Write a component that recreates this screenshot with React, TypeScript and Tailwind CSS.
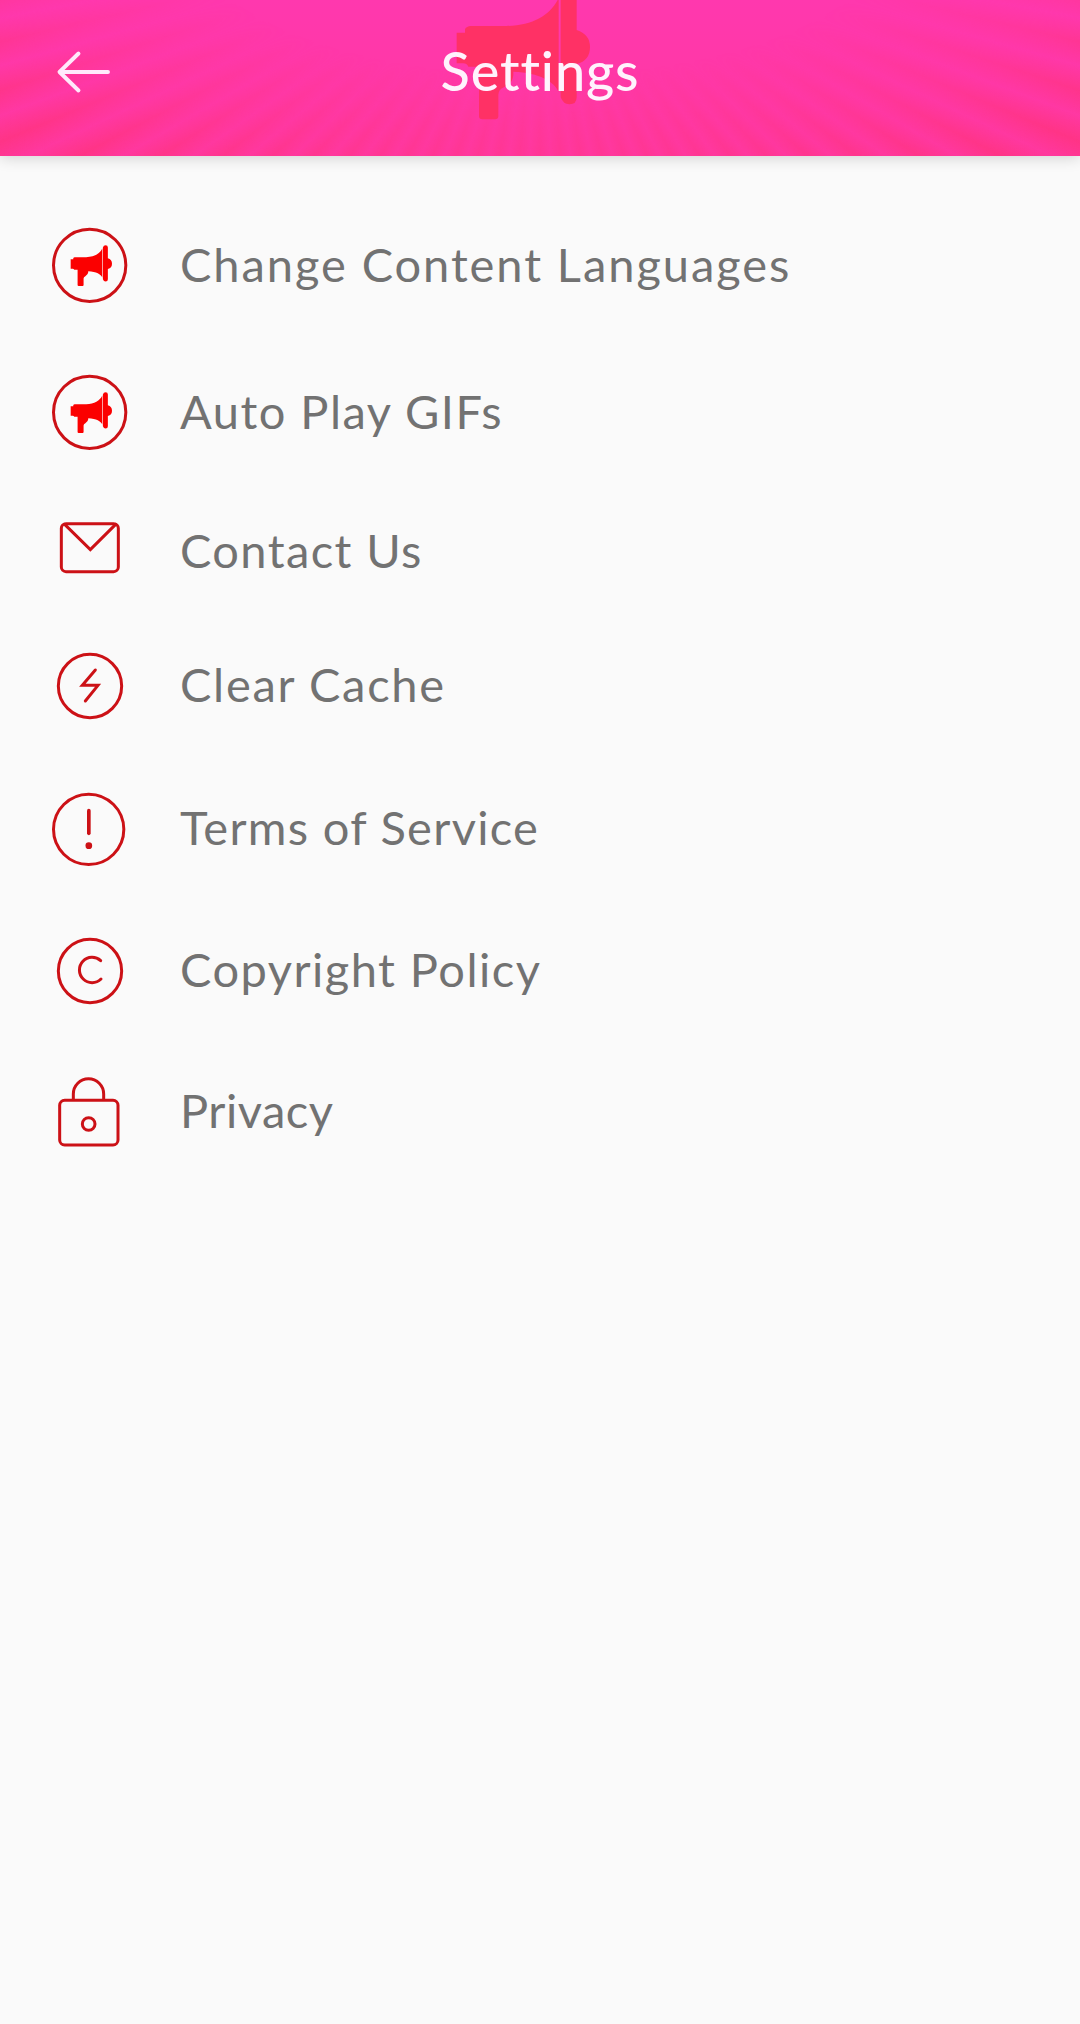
import type { ReactNode } from "react";

type Item = {
  label: string;
  icon: ReactNode;
  // row height, plus how far the icon hangs above the text line
  row: string;
  offset: string;
  text: string;
};

function Horn() {
  return (
    <g>
      <path d="M80 98 H105 V88 Q108 80 120 78 H230 C310 76 362 45 386 -6 V275 C372 245 330 218 250 215 V225 Q248 250 222 262 Q205 268 205 285 V348 Q205 358 195 358 H157 Q147 358 147 348 V200 H115 Q110 190 100 190 H80 Z" />
      <path d="M392 -14 Q398 -36 418 -36 Q440 -36 440 -14 V90 Q480 103 480 141 Q480 182 440 192 V292 Q440 313 418 313 Q400 313 392 292 Z" />
    </g>
  );
}

function HornIcon() {
  return (
    <>
      <circle cx="149" cy="151" r="108.5" />
      <g transform="translate(67.2 102.2) scale(0.31)" className="fill-[#fb0000]" stroke="none">
        <Horn />
      </g>
    </>
  );
}

const items: Item[] = [
  {
    label: "Change Content Languages",
    row: "h-[147px]",
    offset: "-mt-[19px]",
    text: "tracking-[1.93px]",
    icon: <HornIcon />,
  },
  {
    label: "Auto Play GIFs",
    row: "h-[139px]",
    offset: "-mt-[19px]",
    text: "tracking-[1.5px]",
    icon: <HornIcon />,
  },
  {
    label: "Contact Us",
    row: "h-[134px]",
    offset: "-mt-[10px]",
    text: "tracking-[1.4px]",
    icon: (
      <>
        <rect x="64" y="41" width="171" height="144" rx="14" />
        <path d="M74 43 L151 119 L227 43" />
      </>
    ),
  },
  {
    label: "Clear Cache",
    row: "h-[143px]",
    offset: "-mt-[14px]",
    text: "tracking-[1.7px]",
    icon: (
      <>
        <circle cx="150" cy="138" r="95" />
        <path d="M166 90 L127 136 H174 L136 183" />
      </>
    ),
  },
  {
    label: "Terms of Service",
    row: "h-[142px]",
    offset: "-mt-[17px]",
    text: "tracking-[1.3px]",
    icon: (
      <>
        <circle cx="146" cy="148" r="105.5" />
        <path d="M146.500 92 V160" strokeWidth="11" />
        <circle cx="146.500" cy="197" r="10" className="fill-[#cc1116]" stroke="none" />
      </>
    ),
  },
  {
    label: "Copyright Policy",
    row: "h-[141px]",
    offset: "-mt-[14px]",
    text: "tracking-[1.47px]",
    icon: (
      <>
        <circle cx="150" cy="138" r="95" />
        <path d="M182 107 A38 38 0 1 0 183 162" />
      </>
    ),
  },
  {
    label: "Privacy",
    row: "h-[60px]",
    offset: "-mt-[20px]",
    text: "tracking-[0.5px]",
    icon: (
      <>
        <rect x="59" y="121" width="175" height="134" rx="15" />
        <path d="M100 118 V102 A45.500 45.500 0 0 1 191 102 V118" />
        <circle cx="146" cy="192" r="19" />
      </>
    ),
  },
];

function Header() {
  return (
    <header className="relative h-[156px] bg-[linear-gradient(#ff38ae,#ff38a6_55%,#ff389e)] shadow-[0_2px_14px_rgba(0,0,0,0.16)]">
      {/* sunburst, fading out towards its centre */}
      <div className="absolute inset-0 overflow-hidden">
        <div className="h-full bg-[repeating-conic-gradient(from_0deg_at_50%_-85px,#ff338800_0deg,#ff3380_2.4deg,#ff338800_4.8deg)] [mask-image:radial-gradient(700px_290px_at_50%_-70px,transparent_50%,rgba(0,0,0,0.35)_78%,rgba(0,0,0,0.8)_100%)]" />
      </div>
      <svg viewBox="0 0 660 468" className="absolute left-[430px] top-0 h-[156px] w-[220px] fill-[#ff3165]">
        <Horn />
      </svg>

      <div className="relative grid h-36 grid-cols-[1fr_auto_1fr] items-center">
        <svg
          viewBox="0 0 56 44"
          className="ml-14 h-11 w-14 fill-none stroke-[#ffe9fb] stroke-[3.9]"
          strokeLinecap="round"
          strokeLinejoin="round"
        >
          <path d="M22.500 3.500 L3.500 22 L22.500 40.500 M3.500 22 H52" />
        </svg>
        <h1 className="-mt-[3px] text-[54px] leading-[64px] font-medium tracking-[0.9px] text-[#fff3fd]">
          Settings
        </h1>
      </div>
    </header>
  );
}

export default function App() {
  return (
    <div className="h-[2024px] w-full overflow-hidden bg-[#fafafa] font-[Lato,'Liberation_Sans',sans-serif]">
      <Header />
      <ul className="pt-[78px] pl-10">
        {items.map((item) => (
          <li key={item.label} className={`flex items-start gap-10 ${item.row}`}>
            <svg
              viewBox="0 0 300 300"
              className={`size-[100px] shrink-0 fill-none stroke-[#cc1116] ${item.offset}`}
              strokeWidth="9"
              strokeLinecap="round"
            >
              {item.icon}
            </svg>
            <span className={`text-[47px] leading-[60px] whitespace-nowrap text-[#727272] ${item.text}`}>
              {item.label}
            </span>
          </li>
        ))}
      </ul>
    </div>
  );
}
